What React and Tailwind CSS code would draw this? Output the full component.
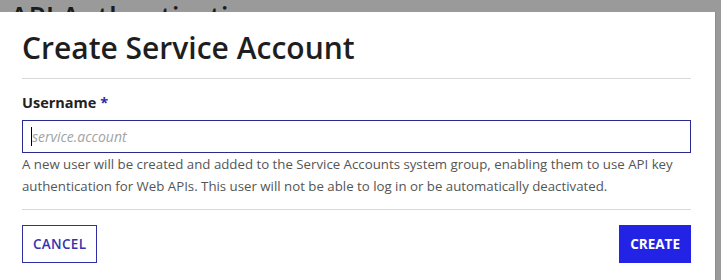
export default function App() {
  return (
    <div className="w-[721px] h-[280px] overflow-hidden bg-[#9a9a9a] font-['Open_Sans',sans-serif]">
      <div className="h-[12px] overflow-hidden pl-[10px]">
        <h1 className="text-[28px] leading-[36px] text-[#1c1c1c] font-semibold mt-[-1px] whitespace-nowrap">API Authentication</h1>
      </div>
      <div className="flex">
        <div className="w-[716px] h-[268px] bg-white px-[22px] pr-[24px] pt-[16px] border-r border-[#8c8c8c]">
          <h2 className="text-[30px] leading-[40px] font-semibold text-[#1e1e1e] pb-[10px] border-b border-[#d9d9d9]">Create Service Account</h2>
          <div className="pt-[14px]">
            <label className="block text-[14.5px] leading-[20px] font-bold text-[#222]">
              Username <span className="text-[#2b2ba6]">*</span>
            </label>
            <div className="relative mt-[7px]">
              <input
                readOnly
                placeholder="service.account"
                className="w-full h-[33px] border border-[#2a2a8f] px-[9px] text-[14px] italic text-[#333] placeholder:text-[#a3a3a3] outline-none"
              />
              <span className="absolute left-[9px] top-[7px] w-px h-[19px] bg-black" />
            </div>
            <p className="text-[13.25px] leading-[22px] text-[#555]">
              A new user will be created and added to the Service Accounts system group, enabling them to use API key authentication for Web APIs. This user will not be able to log in or be automatically deactivated.
            </p>
          </div>
          <div className="mt-[12px] border-t border-[#d9d9d9] pt-[15px] flex justify-between">
            <button className="h-[38px] px-[10px] border border-[#2f2fa3] text-[#3434b0] text-[13.5px] font-semibold tracking-[0.3px]">CANCEL</button>
            <button className="h-[38px] px-[11px] bg-[#2323e6] text-white text-[13.5px] font-bold">CREATE</button>
          </div>
        </div>
      </div>
    </div>
  );
}
